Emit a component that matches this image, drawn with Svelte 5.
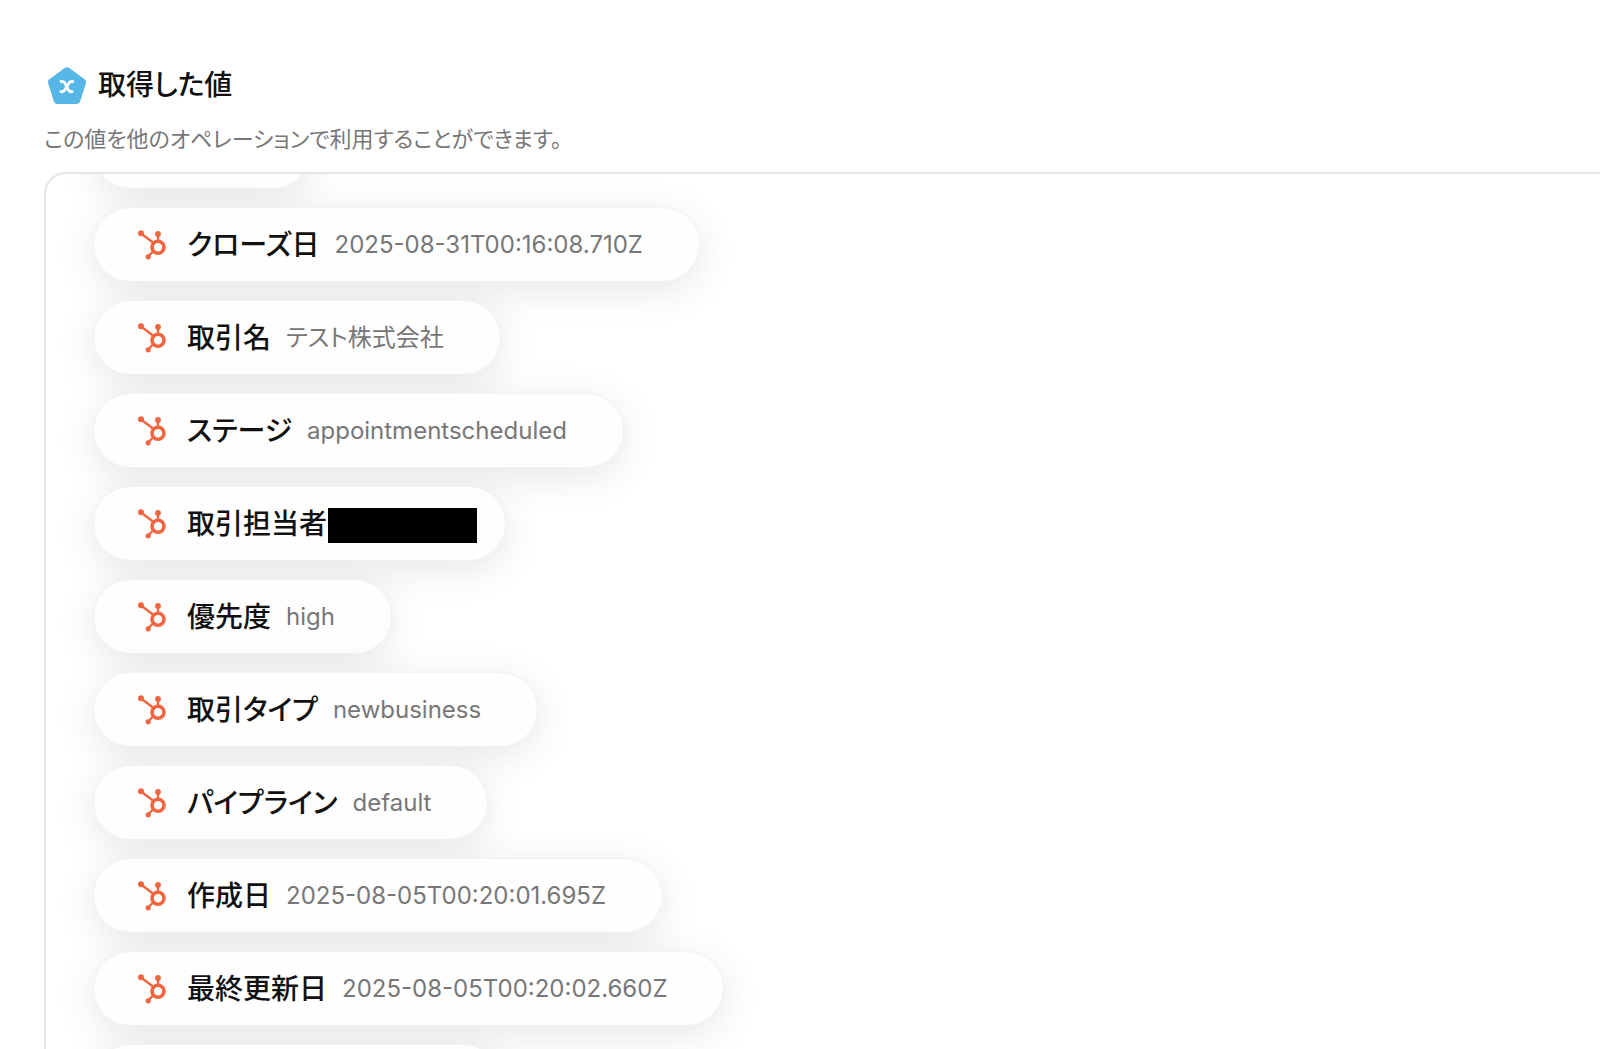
<script lang="ts">
	import { onMount } from 'svelte';

	type Field = { label?: string; value?: string; hidden?: boolean; width?: number };

	const fields: Field[] = [
		{ width: 218 },
		{ label: 'クローズ日', value: '2025-08-31T00:16:08.710Z' },
		{ label: '取引名', value: 'テスト株式会社' },
		{ label: 'ステージ', value: 'appointmentscheduled' },
		{ label: '取引担当者', hidden: true },
		{ label: '優先度', value: 'high' },
		{ label: '取引タイプ', value: 'newbusiness' },
		{ label: 'パイプライン', value: 'default' },
		{ label: '作成日', value: '2025-08-05T00:20:01.695Z' },
		{ label: '最終更新日', value: '2025-08-05T00:20:02.660Z' },
		{ width: 408 }
	];

	let panel: HTMLElement | null = $state(null);

	onMount(() => {
		if (panel) panel.scrollTop = 108;
	});
</script>

<main>
	<header>
		<h1>
			<svg class="logo" viewBox="0 0 40 40" aria-hidden="true">
				<path
					d="M17.400 3.200q2.600-1.900 5.200 0l14.700 10.700q2.400 1.800 1.500 4.700l-5.400 17.200q-1 3.200-4.300 3.200H10.900q-3.300 0-4.300-3.200L1.200 18.600q-.9-2.900 1.500-4.700z"
					fill="#56b7e6"
				/>
				<path
					d="M14 16.500c2.400-.3 3.500.8 4.300 2.500l2.600 5.200c.8 1.700 1.900 2.800 4.300 2.500M25.800 16.500c-2.200-.3-3.400.8-4.400 2.500l-3.200 5.200c-1 1.700-2.200 2.800-4.400 2.500"
					fill="none"
					stroke="#fff"
					stroke-width="2.800"
					stroke-linecap="round"
				/>
			</svg>
			取得した値
		</h1>
		<p>この値を他のオペレーションで利用することができます。</p>
	</header>

	<section class="panel" bind:this={panel}>
		<ul>
			{#each fields as field}
				<li style:width={field.width ? `${field.width}px` : null}>
					{#if field.label}
						<svg class="icon" viewBox="0 0 28 30" aria-hidden="true">
							<g stroke="#f0653f" fill="none">
								<path d="M3 3.500 15 12.500M20 4v7M15 21.500 10.500 26" stroke-width="2.300" />
								<circle cx="20" cy="17.200" r="6" stroke-width="3.600" />
							</g>
							<g fill="#f0653f">
								<circle cx="3" cy="3.200" r="3" />
								<circle cx="20" cy="4" r="2.900" />
								<circle cx="10.200" cy="26.800" r="2.600" />
							</g>
						</svg>
						<span class="label" class:tight={field.hidden}>{field.label}</span>
						{#if field.hidden}
							<span class="mask"></span>
						{:else}
							<span class="value">{field.value}</span>
						{/if}
					{/if}
				</li>
			{/each}
		</ul>
	</section>
</main>

<style>
	:global(body) {
		background: #fff;
	}

	main {
		box-sizing: border-box;
		height: 100vh;
		display: flex;
		flex-direction: column;
		padding: 63px 0 0 44px;
		font-family: Inter, 'Noto Sans CJK JP', sans-serif;
		font-feature-settings: 'palt';
		color: #111;
	}

	h1 {
		display: flex;
		align-items: center;
		gap: 11px;
		margin: 0 0 0 3px;
		font-size: 28px;
		font-weight: 500;
		line-height: 44px;
	}

	.logo {
		width: 40px;
		height: 40px;
	}

	p {
		margin: 15px 0 16px;
		font-size: 22px;
		line-height: 34px;
		color: #777;
	}

	.panel {
		flex: 1;
		min-height: 0;
		overflow: auto;
		scrollbar-width: none;
		border: solid #e5e5e5;
		border-width: 2px 0 0 2px;
		border-top-left-radius: 22px;
	}

	ul {
		display: flex;
		flex-direction: column;
		align-items: flex-start;
		gap: 18px;
		margin: 0;
		padding: 48px 47px;
		list-style: none;
	}

	li {
		box-sizing: border-box;
		height: 75px;
		display: flex;
		align-items: center;
		padding: 0 56px 0 44px;
		border: 1px solid #f2f2f2;
		border-radius: 38px;
		background: #fefefe;
		box-shadow: 0 8px 40px #0000001a;
		line-height: 40px;
		white-space: nowrap;
	}

	li:has(.mask) {
		padding-right: 28px;
	}

	.icon {
		width: 28px;
		height: 30px;
		margin-right: 21px;
	}

	.label {
		margin-right: 15px;
		font-size: 28px;
		font-weight: 500;
	}

	.label.tight {
		margin-right: 1px;
	}

	.value {
		font-size: 24px;
		color: #777;
	}

	.mask {
		width: 149px;
		height: 35px;
		margin-top: 4px;
		background: #000;
	}
</style>
